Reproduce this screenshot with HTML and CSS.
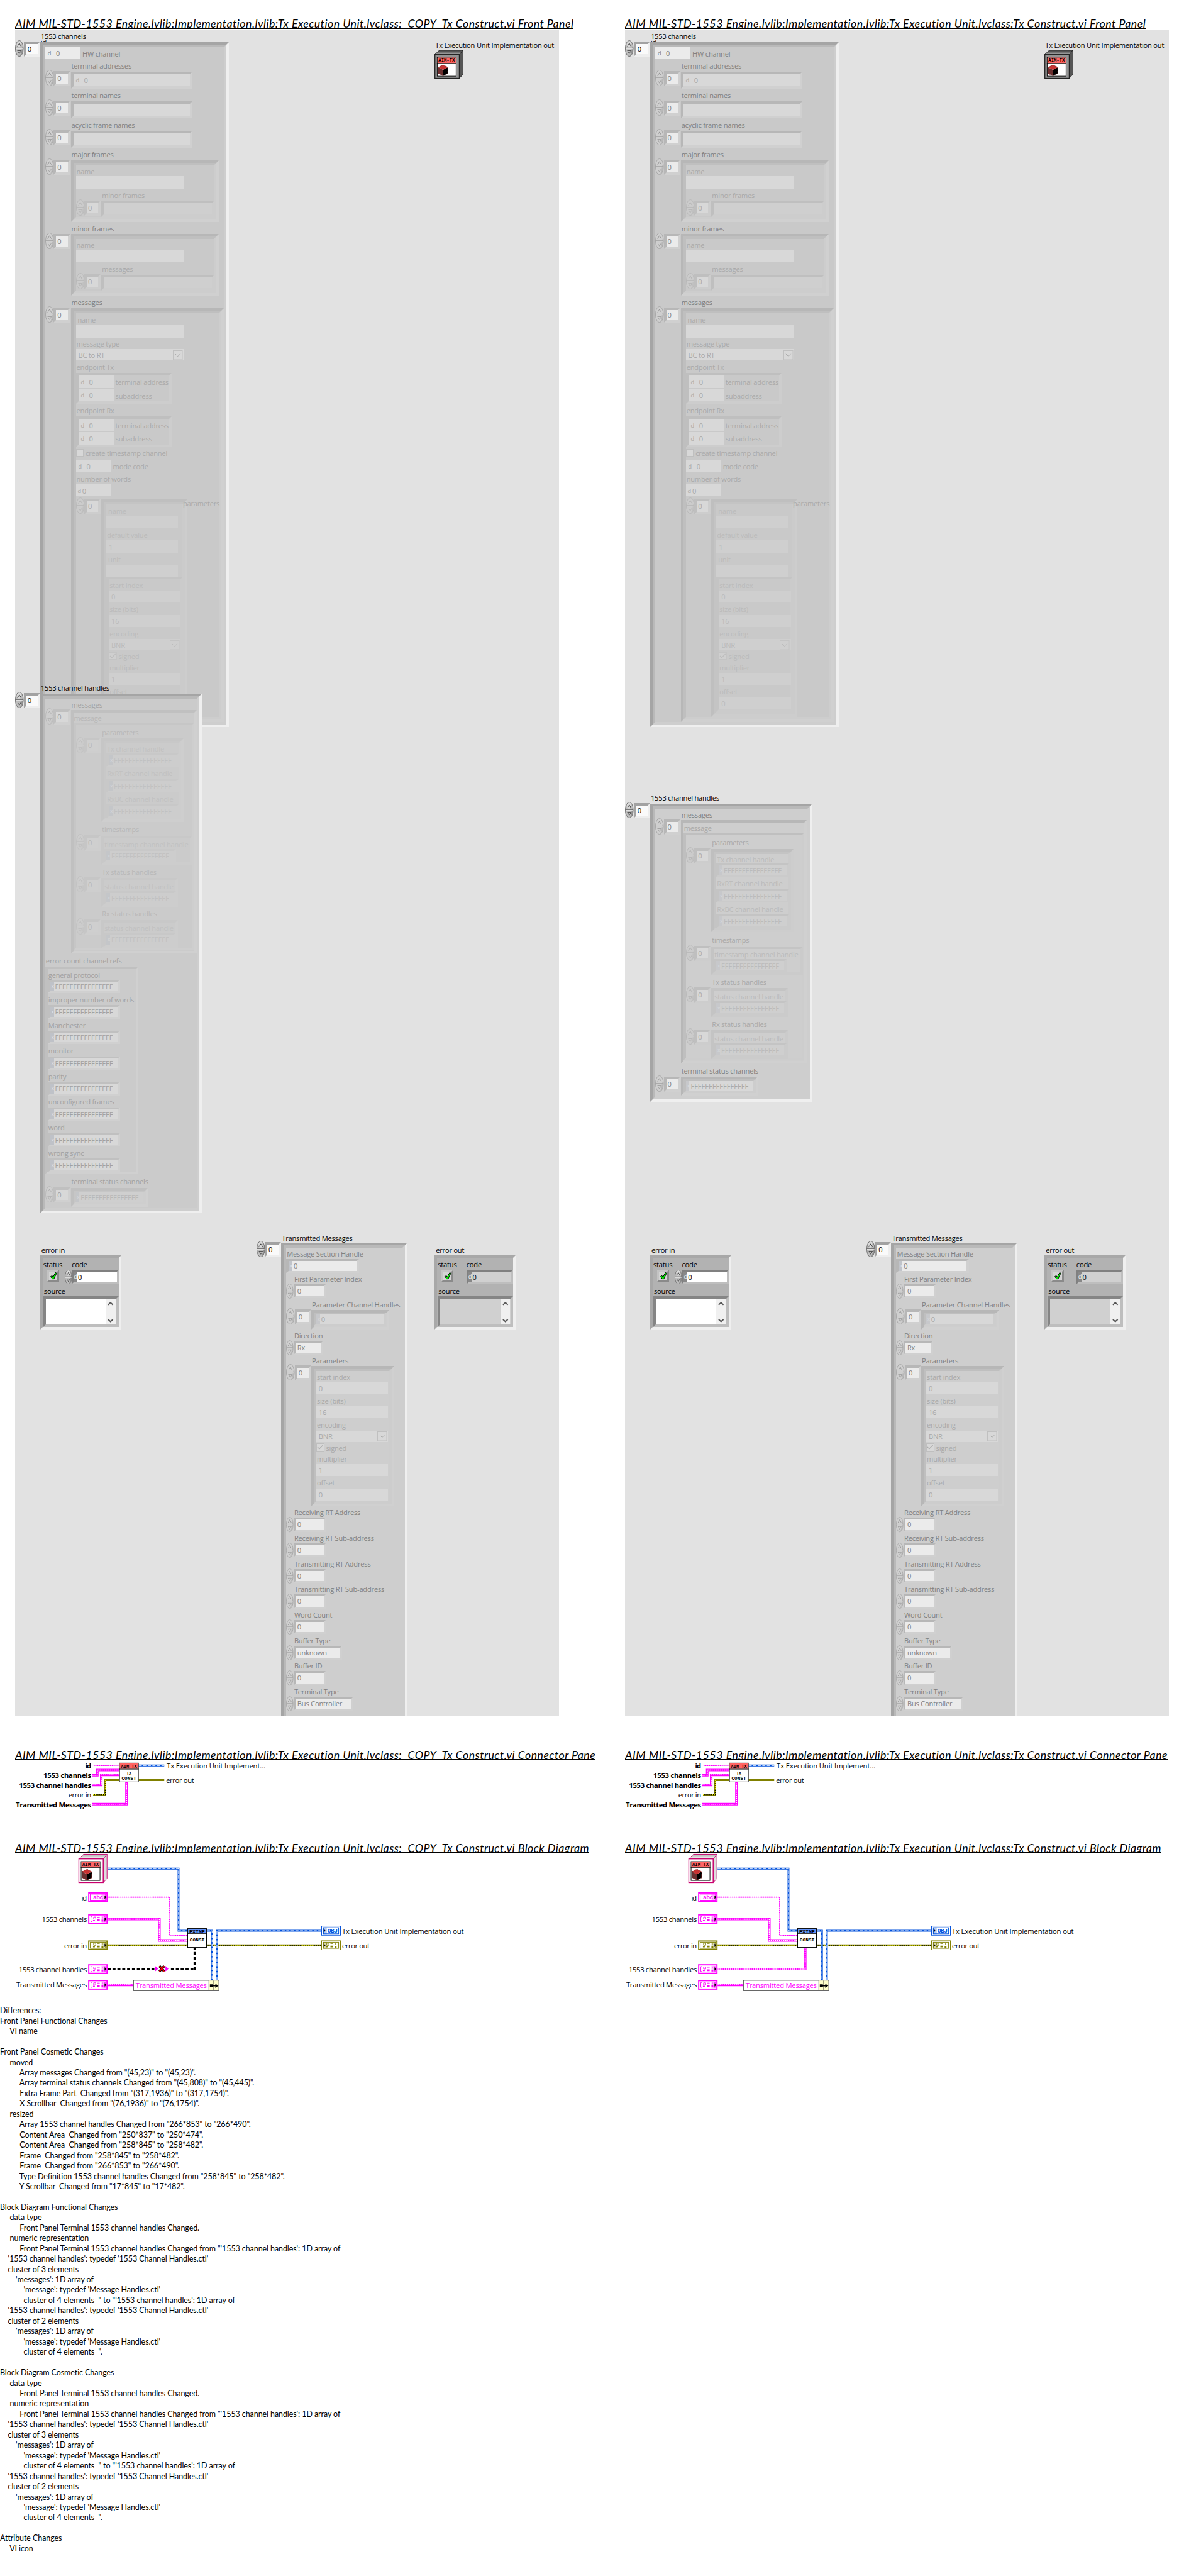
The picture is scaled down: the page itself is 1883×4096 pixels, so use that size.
FILE: index.html
```html
<!DOCTYPE html>
<html lang="en">
<head>
<meta charset="utf-8">
<title>VI comparison: Tx Construct.vi</title>
<link rel="stylesheet" href="styles.css">
</head>
<body>
<main class="page">
  <div class="versions">
    <article class="version">
      <h2 class="title title-first"><span class="title-copy">AIM MIL-STD-1553 Engine.lvlib:Implementation.lvlib:Tx Execution Unit.lvclass:&nbsp; COPY&nbsp; Tx Construct.vi Front Panel</span></h2>
      <section class="panel" data-panel="copy"></section>
      <h2 class="title title-pane"><span class="title-copy">AIM MIL-STD-1553 Engine.lvlib:Implementation.lvlib:Tx Execution Unit.lvclass:&nbsp; COPY&nbsp; Tx Construct.vi Connector Pane</span></h2>
      <section class="pane" data-pane></section>
      <h2 class="title title-block"><span class="title-copy">AIM MIL-STD-1553 Engine.lvlib:Implementation.lvlib:Tx Execution Unit.lvclass:&nbsp; COPY&nbsp; Tx Construct.vi Block Diagram</span></h2>
      <section class="block" data-block="copy"></section>
    </article>
    <article class="version">
      <h2 class="title title-first"><span>AIM MIL-STD-1553 Engine.lvlib:Implementation.lvlib:Tx Execution Unit.lvclass:Tx Construct.vi Front Panel</span></h2>
      <section class="panel" data-panel="original"></section>
      <h2 class="title title-pane"><span>AIM MIL-STD-1553 Engine.lvlib:Implementation.lvlib:Tx Execution Unit.lvclass:Tx Construct.vi Connector Pane</span></h2>
      <section class="pane" data-pane></section>
      <h2 class="title title-block"><span>AIM MIL-STD-1553 Engine.lvlib:Implementation.lvlib:Tx Execution Unit.lvclass:Tx Construct.vi Block Diagram</span></h2>
      <section class="block" data-block="original"></section>
    </article>
  </div>
<pre class="differences">Differences:
Front Panel Functional Changes
     VI name

Front Panel Cosmetic Changes
     moved
          Array messages Changed from "(45,23)" to "(45,23)".
          Array terminal status channels Changed from "(45,808)" to "(45,445)".
          Extra Frame Part  Changed from "(317,1936)" to "(317,1754)".
          X Scrollbar  Changed from "(76,1936)" to "(76,1754)".
     resized
          Array 1553 channel handles Changed from "266*853" to "266*490".
          Content Area  Changed from "250*837" to "250*474".
          Content Area  Changed from "258*845" to "258*482".
          Frame  Changed from "258*845" to "258*482".
          Frame  Changed from "266*853" to "266*490".
          Type Definition 1553 channel handles Changed from "258*845" to "258*482".
          Y Scrollbar  Changed from "17*845" to "17*482".

Block Diagram Functional Changes
     data type
          Front Panel Terminal 1553 channel handles Changed.
     numeric representation
          Front Panel Terminal 1553 channel handles Changed from "'1553 channel handles': 1D array of
    '1553 channel handles': typedef '1553 Channel Handles.ctl'
    cluster of 3 elements
        'messages': 1D array of
            'message': typedef 'Message Handles.ctl'
            cluster of 4 elements  " to "'1553 channel handles': 1D array of
    '1553 channel handles': typedef '1553 Channel Handles.ctl'
    cluster of 2 elements
        'messages': 1D array of
            'message': typedef 'Message Handles.ctl'
            cluster of 4 elements  ".

Block Diagram Cosmetic Changes
     data type
          Front Panel Terminal 1553 channel handles Changed.
     numeric representation
          Front Panel Terminal 1553 channel handles Changed from "'1553 channel handles': 1D array of
    '1553 channel handles': typedef '1553 Channel Handles.ctl'
    cluster of 3 elements
        'messages': 1D array of
            'message': typedef 'Message Handles.ctl'
            cluster of 4 elements  " to "'1553 channel handles': 1D array of
    '1553 channel handles': typedef '1553 Channel Handles.ctl'
    cluster of 2 elements
        'messages': 1D array of
            'message': typedef 'Message Handles.ctl'
            cluster of 4 elements  ".

Attribute Changes
     VI icon</pre>
</main>
<script src="script.js"></script>
</body>
</html>
```
FILE: styles.css
```css
/* bevels are a hair over 3px and 4px so that they stay whole after the page zoom */
:root { --b3: 3.15px; --b4: 4.2px; }
body { margin: 0; background: #fff; }
.page {
  width: 1945px; height: 4230px; overflow: hidden; zoom: 0.9682;
  font: 11.5px/16px "Open Sans", "Noto Sans", sans-serif; letter-spacing: -0.22px; color: #000;
}
.versions { display: flex; height: 3294px; padding-left: 25px; }
.version { flex: none; width: 1002px; }

/* headings */
.title {
  margin: 0; height: 20px; overflow: hidden; white-space: nowrap;
  font: italic 18.4px/22px Lato, sans-serif;
}
.title span { display: inline-block; height: 17.5px; border-bottom: 2.1px solid #000; overflow: hidden; letter-spacing: 0.51px; }
.title .title-copy { letter-spacing: 0.47px; }
.title-first { padding-top: 28px; margin-bottom: 1px; }
.title-pane { margin-top: 53px; }
.title-block { margin-top: 133px; }
.pane, .block { height: 0; }
.pane svg, .block svg { display: block; overflow: visible; }

/* front panel: controls sit on a free canvas */
.panel { position: relative; width: 893px; height: 2769px; background: #e2e2e2; overflow: hidden; }
.place { position: absolute; }
.at-channels { left: 0; top: 0; }
.at-id { left: 42px; top: 12px; }
.at-handles-copy { left: 0; top: 1069px; }
.at-handles-original { left: 0; top: 1250px; }
.at-error-in { left: 41px; top: 1994px; }
.at-error-out { left: 689px; top: 1994px; }
.at-messages { left: 396px; top: 1975px; }
.at-object { left: 689px; top: 16px; }

/* palettes: each nesting level of a disabled array is paler */
.l0 { --ink: #000; --field: #fafafa; --dark: #a2a2a2; --lite: #eeeeee; --face: #bdbdbd; --edge: #6e6e6e; }
.l1 { --ink: #808080; --field: #ebebeb; --dark: #b7b7b7; --lite: #d0d0d0; --face: #cfcfcf; --edge: #a6a6a6; }
.l2 { --ink: #a9a9a9; --field: #d8d8d8; --dark: #bfbfbf; --lite: #cdcdcd; --face: #cbcbcb; --edge: #b9b9b9; }
.l3 { --ink: #bbbbbb; --field: #cfcfcf; --dark: #c4c4c4; --lite: #cbcbcb; --face: #cacaca; --edge: #c2c2c2; }
.at-handles-copy .l1 { --ink: #a1a1a1; --field: #d8d8d8; --dark: #c0c0c0; --face: #cdcdcd; --edge: #bababa; }
.at-handles-copy .l2 { --ink: #b8b8b8; --field: #cfcfcf; --dark: #c6c6c6; --lite: #cecece; --edge: #c2c2c2; }
.at-handles-copy .l3 { --ink: #c1c1c1; --field: #cdcdcd; --dark: #c8c8c8; --lite: #cdcdcd; }
.at-handles-copy .frame { --fill: #cbcbcb; }
.at-handles-original .frame, .at-messages .frame { --fill: #cecece; }

.label {
  box-sizing: border-box; height: 20px; display: flex; align-items: center; white-space: nowrap;
  color: var(--ink); padding: 2px 0 0 1px;
}
.label.inset { padding-left: 3px; }
.label.tab { padding-left: 13px; }
.array { display: grid; grid-template-columns: 42px max-content; position: relative; }
.array > .label { grid-column: 2; }
.array.root { grid-template-columns: 41px max-content; }
.array > .label.over { position: absolute; left: 133px; top: -4px; }
.index { grid-column: 1; display: flex; margin-top: -3px; height: 28px; align-items: flex-start; }
.spin { flex: none; display: block; color: var(--ink); }
.index .value {
  box-sizing: border-box; width: 27px; height: 25px; margin-top: 2px; padding-left: 2px;
  border: var(--b4) solid; border-color: var(--dark) var(--lite) var(--lite) var(--dark);
  background: var(--field); color: var(--ink); line-height: 17px;
}
.frame, .cluster {
  box-sizing: border-box; border: var(--b4) solid;
  border-color: var(--dark) var(--lite) var(--lite) var(--dark);
}
.frame { background: var(--fill, #c9c9c9); }
.frame > .cluster { height: 100%; }
.frame.l0 > .cluster { border-color: #b9b9b9 #cecece #cecece #b9b9b9; }
.frame.l0 { border-color: #a5a5a5 #efefef #efefef #a5a5a5; }
.frame > .field { width: 100%; height: 100%; border: 0; }
.field {
  box-sizing: border-box; display: flex; align-items: center; width: 118px; height: 20px;
  padding: 1px 0 0 4px; background: var(--field); color: var(--ink);
}
.field.wide { width: 178px; }
.field.short { width: 58px; }
.field.tight { padding-left: 3px; }
.field .radix { font-size: 9.5px; margin-right: 8px; }
.field.tight .radix { margin-right: 2px; }
.combo { justify-content: space-between; padding-right: 1px; height: 18.5px; }
.row { display: flex; align-items: center; gap: 3px; height: 20px; color: var(--ink); white-space: nowrap; }
.row > span:last-child { padding-top: 2px; }
.row + .row { margin-top: 2px; }
.hex {
  box-sizing: border-box; display: flex; width: 119px; height: 22px; border: solid;
  border-width: var(--b3) var(--b4); border-color: var(--dark) var(--lite) var(--lite) var(--dark);
  color: var(--ink);
}
.hex i { width: 6px; font: 8px/16px "Open Sans", sans-serif; color: #dfe3ea; background: rgba(150, 165, 190, .22); text-align: right; }
.hex b { flex: 1; font-weight: 400; padding-left: 2px; background: var(--field); line-height: 16px; white-space: nowrap; }
.hex.all b { letter-spacing: 0; }
.l2 .hex i, .l3 .hex i { opacity: .5; }
.number { display: flex; height: 24px; align-items: center; }
.number .value {
  box-sizing: border-box; height: 23px; border: var(--b3) solid; padding-left: 3px; line-height: 17px;
  border-color: var(--dark) var(--lite) var(--lite) var(--dark); background: var(--field); color: var(--ink);
}
.check { box-sizing: border-box; width: 13px; height: 13px; border: 1.05px solid var(--dark); background: var(--field); color: var(--ink); }
.check svg { display: block; }

/* error clusters */
.error .frame { --fill: #b2b2b2; width: 133px; height: 121px; border-color: #a8a8a8 #efefef #efefef #a8a8a8; }
.error .top { display: grid; grid-template-columns: 36px 12px 1fr; height: 43px; }
.error .top .label { height: 19px; padding-left: 0; }
.error .top .label:first-child { grid-column: 1 / 3; padding-left: 1px; }
.lamp { box-sizing: border-box; margin-left: 7px; width: 20px; height: 20px; border: var(--b3) solid; border-color: #c4c4c4 #8a8a8a #8a8a8a #c4c4c4; background: #d4d4d4; }
.lamp svg { display: block; }
.code { box-sizing: border-box; display: flex; width: 77px; height: 24px; border: var(--b3) solid; border-color: #808080 #bebebe #bebebe #808080; background: #fff; line-height: 18px; }
.code i { width: 6px; background: #888; color: #eee; font: 10px/17px "Open Sans", sans-serif; }
.code b { font-weight: 400; padding-left: 1px; }
.source { box-sizing: border-box; display: flex; justify-content: flex-end; width: 124px; height: 50px; margin-left: 1px; border: var(--b4) solid; border-color: #858585 #bebebe #bebebe #858585; background: #fff; }
.source .scroll { width: 16px; height: 40px; margin: 1px; background: #f0f0f0; }
.error .label { height: 20px; padding-left: 2px; }
.out .code, .out .source { background: #d0d0d0; }

/* diagrams */
svg text { font-family: "Open Sans", "Noto Sans", sans-serif; font-size: 11.6px; letter-spacing: 0; }
svg .strong { font-weight: 700; }
svg .pixel { font: 700 8px "Liberation Mono", monospace; }
svg .tiny { font: 700 10px "Liberation Mono", monospace; }

.differences {
  margin: 0; font: 12.9px/17px Lato, sans-serif; letter-spacing: -0.07px; white-space: pre;
}
```
FILE: script.js
```js
const px = n => `${n}px`;

/* ---------- front panel controls ---------- */
const label = (text, h = 20, cls = '') => `<div class="label ${cls}" style="height:${px(h)}">${text}</div>`;
const spinner = (w = 14, h = 27) => `<svg class="spin" width="${w}" height="${h}" viewBox="0 0 14 27" preserveAspectRatio="none">
  <ellipse cx="7" cy="13.5" rx="6.5" ry="13" fill="var(--face)" stroke="var(--edge)"/>
  <path d="M3 5Q7-2 10 3L8 11L4 11Z" fill="var(--lite)" opacity=".6"/>
  <path d="M13 8Q14.500 20 8 26Q11 20 11 14Z" fill="var(--edge)" opacity=".6"/>
  <path d="M1 13H13" stroke="var(--edge)"/><path d="M1 14.2H13" stroke="var(--lite)"/>
  <path d="M4 10L7 5L10 10" fill="none" stroke="var(--ink)" stroke-width="1" opacity=".75"/>
  <path d="M4 17H10L7 22Z" fill="none" stroke="var(--ink)" stroke-width=".9" opacity=".65"/></svg>`;
const index = () => `<div class="index">${spinner()}<div class="value">0</div></div>`;
const field = (text = '', cls = '') => `<div class="field ${cls}">${text}</div>`;
const dec = (name, cls = '') => `<div class="row">${field('<span class="radix">d</span>0', 'short ' + cls)}${name ? `<span>${name}</span>` : ''}</div>`;
const combo = (text, cls = '') => `<div class="field combo ${cls}"><span>${text}</span><svg width="17" height="16">
  <rect x=".5" y=".5" width="15" height="15" fill="none" stroke="var(--dark)"/><path d="M4 6L8 10L12 6" fill="none" stroke="var(--ink)"/></svg></div>`;
const check = (name, on, h) => `<div class="row" style="height:${px(h)}"><span class="check">${on ?
  '<svg width="11" height="11"><path d="M1 5L4 8L10 2" fill="none" stroke="currentColor" stroke-width="1.2"/></svg>' : ''}</span><span>${name}</span></div>`;
const hex = (text = 'FFFFFFFFFFFFFFFF') => `<div class="hex ${text === '0' ? '' : 'all'}"><i>x</i><b>${text}</b></div>`;
const frame = (level, w, h, body) => `<div class="frame ${level}" style="width:${px(w)};height:${px(h)}">${body}</div>`;
const cluster = (level, body, w, h) => `<div class="cluster ${level}"${w ? ` style="width:${px(w)};height:${px(h)}"` : ''}>${body}</div>`;
const array = (level, name, h, box, cls = '') => `<div class="array ${level} ${cls}">${name ? label(name, h) : ''}${index()}${box}</div>`;
const number = (name, value, w, h = 18) => label(name, h, 'tab') +
  `<div class="number">${spinner(12, 25)}<div class="value" style="width:${px(w)}">${value}</div></div>`;

const scaling = () => label('start index', 18) + field('0') + label('size (bits)') + field('16') +
  label('encoding') + combo('BNR') + check('signed', true, 18) + label('multiplier', 18.5) + field('1') + label('offset') + field('0');

const channels = () => {
  const list = (name, body = '') => array('l1', name, 20.5, frame('l1', 200, 28, `<div class="field l2">${body}</div>`));
  const frames = (name, inner) => array('l1', name, 20.5, frame('l1', 243, 101, cluster('l2',
    label('name', 18) + field('', 'wide') + array('l2', inner, 20.5, frame('l2', 186, 26, field('', 'l3'))))));
  const endpoint = name => label(name, 21) + cluster('l2', dec('terminal address') + dec('subaddress'), 157, 50);
  const parameters = frame('l2', 141, 357, cluster('l3',
    label('name', 19, 'inset') + field() + label('default value') + field('1') + label('unit', 20, 'inset') + field() +
    cluster('l3', scaling(), 126, 222)));
  const message = label('name', 20, 'inset') + field('', 'wide') + label('message type', 19) + combo('BC to RT', 'wide') +
    endpoint('endpoint Tx') + endpoint('endpoint Rx') + check('create timestamp channel', false, 19.5) + dec('mode code') +
    label('number of words') + dec('', 'tight') +
    `<div class="array l2" style="margin-top:5px">${index()}${parameters}${label('parameters', 20, 'over')}</div>`;
  const body = dec('HW channel') + list('terminal addresses', '<span class="radix">d</span>0') + list('terminal names') +
    list('acyclic frame names') + frames('major frames', 'minor frames') + frames('minor frames', 'messages') +
    array('l1', 'messages', 20.5, frame('l1', 251, 679, cluster('l2', message)));
  return array('l0', '1553 channels', 20, frame('l0', 310, 1125, cluster('l1', body)), 'root');
};

const handles = copy => {
  const refs = (names, first) => names.map((n, i) => label(n, i ? 20 : first) + hex()).join('');
  const status = (name, inner, w, h = 22) => array('l2', name, h, frame('l2 l3', w, 47, refs([inner], 17)));
  const message = array('l2', 'parameters', 22, frame('l2', 135, 137, cluster('l3', refs(['Tx channel handle', 'RxRT channel handle', 'RxBC channel handle'], 16)))) +
    status('timestamps', 'timestamp channel handle', 150, 23) + status('Tx status handles', 'status channel handle', 126) +
    status('Rx status handles', 'status channel handle', 126);
  const counts = label('error count channel refs', 22) + cluster('l1', refs(['general protocol', 'improper number of words', 'Manchester',
    'monitor', 'parity', 'unconfigured frames', 'word', 'wrong sync'], 17), 153, 341);
  const body = array('l1', 'messages', 18.5, frame('l1', 207, 400, `<div class="l2">${label('message', 17)}${cluster('l2', message, 199, 374)}</div>`)) +
    (copy ? counts : '') + array('l1', 'terminal status channels', 22, frame('l1', 126, 31, `<div class="l2">${hex()}</div>`));
  return array('l0', '1553 channel handles', 21, frame('l0', 266, copy ? 853 : 490, cluster('l1', body)), 'root');
};

const transmitted = () => {
  const body = label('Message Section Handle', 19) + hex('0') + number('First Parameter Index', '0', 53) +
    array('l1', 'Parameter Channel Handles', 19, frame('l1', 128, 32, `<div class="l2">${hex('0')}</div>`), 'root') +
    number('Direction', 'Rx', 49) +
    array('l1', 'Parameters', 18, frame('l1', 136, 230, cluster('l2', scaling())), 'root') +
    number('Receiving RT Address', '0', 53, 19) + number('Receiving RT Sub-address', '0', 53) +
    number('Transmitting RT Address', '0', 53) + number('Transmitting RT Sub-address', '0', 53) +
    number('Word Count', '0', 53) + number('Buffer Type', 'unknown', 80) + number('Buffer ID', '0', 53) +
    number('Terminal Type', 'Bus Controller', 98);
  return array('l0', 'Transmitted Messages', 17, frame('l0', 207, 785, cluster('l1', body)), 'root');
};

const error = (name, out) => `<div class="error l0 ${out ? 'out' : ''}">${label(name, 19)}<div class="frame">
  <div class="top"><div class="label">status</div><div class="label">code</div>
  <div class="lamp"><svg width="14" height="14"><path d="M2.5 8L5 6.5L6.5 9L10.5 1.5L12.5 2.5L8 12H5.5Z" fill="#0e0" stroke="#000"/></svg></div>
  ${out ? '<span></span>' : spinner(12, 24)}<div class="code"><i>d</i><b>0</b></div></div>
  ${label('source', 20)}<div class="source"><div class="scroll"><svg width="16" height="40">
  <path d="M4 9L8 5.5L12 9M4 33L8 36.5L12 33" fill="none" stroke="#555" stroke-width="2"/></svg></div></div></div></div>`;

/* class cube, used as an indicator on the panel and a constant on the diagram */
const cube = (x, y, face, edge, dark) => `<g transform="translate(${x} ${y})">
  <path d="M.5 8L8.5 .5H47L41 8Z" fill="url(#${face})" stroke="${edge}"/><path d="M41 8L47 .5V40L41 47Z" fill="${dark}" stroke="${edge}"/>
  <rect x=".75" y="8" width="40" height="39" fill="${face === 'gray' ? '#949494' : '#fff'}" stroke="${edge}" stroke-width="1.4"/>
  <rect x="4.5" y="12.5" width="31" height="31" fill="#fff" stroke="#000"/><rect x="5" y="13" width="30" height="9" fill="#ff6464"/>
  <path d="M4 22.5H36" stroke="#000"/><text class="pixel" x="6.5" y="20" textLength="27" lengthAdjust="spacingAndGlyphs">AIM-TX</text>
  <path d="M6 29L14 33V43L6 39Z" fill="#6b2f2f"/><path d="M22 29L14 33V43L22 39Z" fill="#000"/><path d="M6 29L14 25L22 29L14 33Z" fill="#c83232"/>
  <path d="M6 29L14 25L22 29V39L14 43L6 39Z" fill="none" stroke="#8a2626" stroke-dasharray="2 1"/></g>`;
const gradients = `<defs><linearGradient id="gray" x2="0" y2="1"><stop stop-color="#333"/><stop offset="1" stop-color="#aaa"/></linearGradient>
  <linearGradient id="white" x2="0" y2="1"><stop stop-color="#aaa"/><stop offset="1" stop-color="#fff"/></linearGradient></defs>`;

const panel = kind => {
  const place = (at, html) => `<div class="place at-${at}">${html}</div>`;
  return place('id', 'id') + place('channels', channels()) +
    place(`handles-${kind}`, handles(kind === 'copy')) + place('error-in', error('error in', false)) +
    place('messages', transmitted()) + place('error-out', error('error out', true)) +
    place('object', `<div class="l0">${label('Tx Execution Unit Implementation out', 17)}<svg width="48" height="48">${gradients}${cube(0, 0, 'gray', '#222', '#555')}</svg></div>`);
};

/* ---------- wires and terminals ---------- */
const path = (d, stroke, w, dash = '') => `<path d="${d}" fill="none" stroke="${stroke}" stroke-width="${w}"${dash ? ` stroke-dasharray="${dash}"` : ''}/>`;
const pink = d => path(d, '#f0f', 4.2) + path(d, '#fff', 1.7, '1.8 1.6');
const thin = d => path(d, '#f0f', 1.8, '1.5 1.5') + path(d, '#f0f', .5);
const blue = d => path(d, '#0050dc', 3) + path(d, '#fff', 1.1, '5 2.5');
const olive = d => path(d, '#808000', 3.2) + path(d, '#000', 1.2) + path(d, '#ff0', 1.2, '1.5 1.5');
const text = (x, y, w, s, end, cls = '') => `<text x="${end ? x - w : x}" y="${y}" textLength="${w}" class="${cls}">${s}</text>`;
const terminal = (x, y, color, kind, out) => {
  const mark = kind === 'abc' || kind === 'OBJ'
    ? `<text class="tiny" x="${kind === 'abc' ? 8 : 10}" y="11.5" textLength="17" fill="${color}">${kind}</text>`
    : `<path d="M9 4.5H12.500V8H9ZM15 5H19M23.500 4V7" fill="none" stroke="${color}"/><path d="M8 9.500H11V11.500H8ZM15 8.500H19V11.500H15ZM22 9H25V12H22Z" fill="${color}"/>` +
      (kind === 'array' ? path('M6.500 4H4.500V12H6.500M26 4H28V12H26', color, 1) : '');
  const edge = out ? 1 : 2;
  return `<g transform="translate(${x} ${y})"><rect x="${edge / 2}" y="${edge / 2}" width="${32 - edge}" height="${16 - edge}" fill="#fff" stroke="${color}" stroke-width="${edge}"/>
    ${kind === 'array' ? '' : `<rect x="3.5" y="3" width="25" height="10" fill="#fff" stroke="${color}"/>`}${mark}
    <rect x="${out ? 3 : 22}" y="2.5" width="${out ? 6 : 8}" height="11" fill="${color}" opacity=".3"/><path d="M${out ? 4 : 27} 5L${out ? 7 : 30} 8L${out ? 4 : 27} 11Z"/></g>`;
};
const node = (x, y, head, fill, split, lines) => `<g transform="translate(${x} ${y})"><rect x=".5" y=".5" width="31" height="31" fill="#fff" stroke="#000"/>
  <rect x="1" y="1" width="30" height="${split - 1}" fill="${fill}"/><path d="M0 ${split + .5}H32" stroke="#000"/>
  <text class="pixel" x="3" y="8" textLength="26" lengthAdjust="spacingAndGlyphs">${head}</text>${lines}</g>`;
const line = (x, y, w, s) => `<text class="pixel" x="${x}" y="${y}" textLength="${w}" lengthAdjust="spacingAndGlyphs">${s}</text>`;

/* origin: left edge of the heading, just under its rule */
const pane = () => `<svg width="900" height="90" viewBox="25 2891 900 90">
  ${thin('M154 2899.5H196')}${pink('M152 2915.5H160V2907H196')}${pink('M152 2931.5H166.500V2915H196')}
  ${olive('M153 2947.500H173V2923.5H196')}${pink('M152 2963H208V2927')}${blue('M228 2899.5H270')}${olive('M228 2923.5H270')}
  ${node(196, 2895, 'AIM-TX', '#ff6464', 10, line(12, 20, 8, 'TX') + line(4, 28, 24, 'CONST'))}
  ${text(150, 2904, 10, 'id', 1, 'strong')}${text(150, 2920, 78.5, '1553 channels', 1, 'strong')}
  ${text(150, 2936, 118.5, '1553 channel handles', 1, 'strong')}${text(150, 2952, 37.5, 'error in', 1)}
  ${text(150, 2968, 124, 'Transmitted Messages', 1, 'strong')}
  ${text(274, 2904, 162, 'Tx Execution Unit Implement...')}${text(273, 2928, 46, 'error out')}</svg>`;

const block = copy => `<svg width="900" height="240" viewBox="25 3044 900 240">
  ${blue('M177 3069H293.5V3171H308')}${thin('M177 3116H279V3179H308')}${pink('M177 3152H262V3187H308')}
  ${olive('M177 3195H308M340 3195H354M359 3195H528')}${pink('M177 3260H219')}
  ${copy ? path('M177 3233.700H322', '#000', 3.6, '5 3') + path('M320 3235V3199', '#000', 3.6, '5 3') +
    '<rect x="254" y="3228" width="24" height="12" fill="#fff"/><path d="M255 3229L260 3233.500L255 3238ZM272 3229L277 3233.500L272 3238Z" fill="#f0f"/>' +
    path('M262 3229L270 3238M270 3229L262 3238', '#000', 4) + path('M262 3229L270 3238M270 3229L262 3238', '#e00', 2)
    : pink('M177 3234H321V3199')}
  ${blue('M340 3171H348.500V3252')}${blue('M356.500 3252V3171H528')}
  ${cube(129, 3045, 'white', '#c8006e', '#ddd')}${node(308, 3167, 'EXIMP', '#6496ff', 8, line(4, 22, 24, 'CONST'))}
  ${terminal(145, 3108, '#f0f', 'abc')}${terminal(145, 3144, '#f0f', 'array')}${terminal(145, 3187, '#808000', 'cluster')}
  ${terminal(145, 3226, '#f0f', 'array')}${terminal(145, 3252, '#f0f', 'array')}
  ${terminal(528, 3163, '#0050dc', 'OBJ', 1)}${terminal(528, 3187, '#808000', 'cluster', 1)}
  ${text(143, 3121, 9, 'id', 1)}${text(143, 3157, 74, '1553 channels', 1)}${text(143, 3200, 37.5, 'error in', 1)}
  ${text(143, 3239, 112, '1553 channel handles', 1)}${text(143, 3264, 116, 'Transmitted Messages', 1)}
  ${text(562, 3176, 200, 'Tx Execution Unit Implementation out')}${text(562, 3200, 45.5, 'error out')}
  <rect x="219.500" y="3252.500" width="140" height="17" fill="#fff" stroke="#444"/>
  <rect x="344" y="3253" width="15" height="16" fill="#ffffc8"/><path d="M343.500 3253V3269M351.500 3253V3269" stroke="#000"/>
  <path d="M345 3259H350V3264H345ZM350 3260.500H354V3258L359 3261.500L354 3265V3262.500H350Z"/>
  <text x="223" y="3265" textLength="117" fill="#f0f">Transmitted Messages</text></svg>`;

document.querySelectorAll('[data-panel]').forEach(el => { el.innerHTML = panel(el.dataset.panel); });
document.querySelectorAll('[data-pane]').forEach(el => { el.innerHTML = pane(); });
document.querySelectorAll('[data-block]').forEach(el => { el.innerHTML = block(el.dataset.block === 'copy'); });
```
